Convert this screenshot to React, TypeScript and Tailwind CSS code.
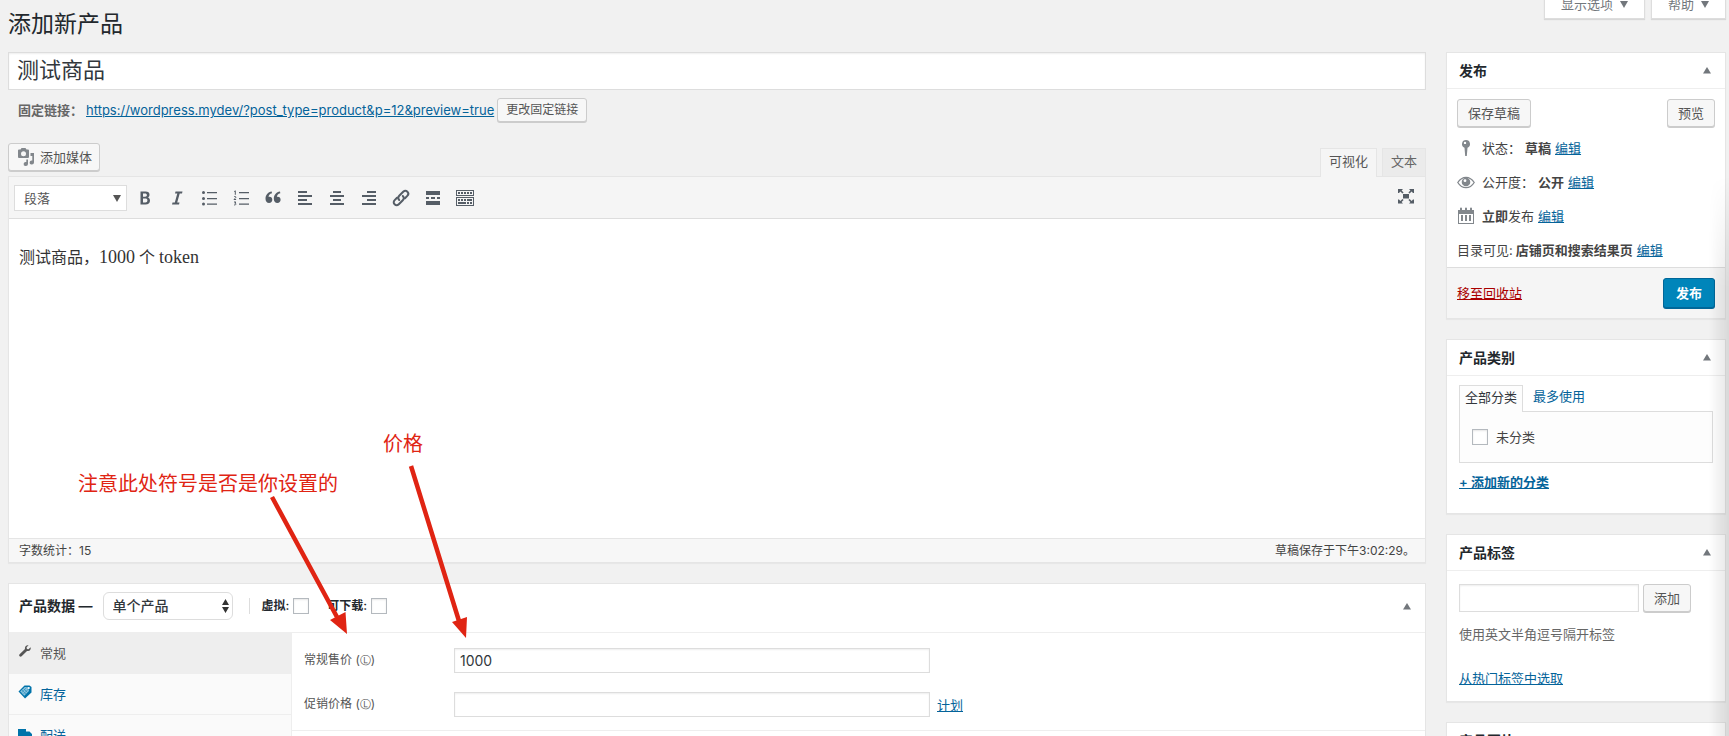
import { useState } from "react";
import type { ReactNode } from "react";

const BUTTON =
  "rounded-[3px] border border-[#ccc] bg-[#f7f7f7] text-[#555] shadow-[0_1px_0_#ccc] whitespace-nowrap";
const LINK = "text-[#04639a] underline";
const CHECKBOX =
  "size-4 shrink-0 appearance-none border border-[#b4b9be] bg-white shadow-[inset_0_1px_2px_rgba(0,0,0,0.1)]";
const FIELD = "border border-[#ddd] bg-white text-[#32373c] shadow-[inset_0_1px_2px_rgba(0,0,0,0.07)]";

function Triangle({ up = false, className = "" }: { up?: boolean; className?: string }) {
  return (
    <svg className={className} width="8" height="7" viewBox="0 0 8 7" fill="currentColor">
      <path d={up ? "M4 0L8 6.5H0z" : "M0 0h8L4 7z"} />
    </svg>
  );
}

function ToolIcon({ label, children }: { label: string; children: ReactNode }) {
  return (
    <button type="button" aria-label={label} className="flex size-5 items-center justify-center text-[#555d66]">
      <svg width="20" height="20" viewBox="0 0 20 20" fill="currentColor">
        {children}
      </svg>
    </button>
  );
}

function Toolbar() {
  return (
    <div className="flex h-[42px] items-center justify-between border-b border-[#ddd] bg-[#f5f5f5] pr-[9px] pl-[5px]">
      <div className="flex items-center gap-3">
        <div className="relative -mr-1">
          <select
            aria-label="格式"
            className="h-[26px] w-[113px] appearance-none border border-[#ddd] bg-white pl-[9px] text-[13px] text-[#555]"
          >
            <option>段落</option>
          </select>
          <Triangle className="pointer-events-none absolute top-[10px] right-[6px] text-[#555]" />
        </div>
        <ToolIcon label="粗体">
          <path
            fillRule="evenodd"
            d="M5.5 3.5h5c2.6 0 4 1.1 4 3.2 0 1.4-.7 2.4-1.9 2.8 1.5.3 2.4 1.4 2.4 3 0 2.5-1.7 4-4.5 4h-5zM8 5.5v3.2h2.100c1.200 0 1.800-.5 1.800-1.600s-.7-1.600-1.900-1.600zm0 5v3.900h2.300c1.400 0 2.100-.7 2.100-2s-.8-1.900-2.200-1.900z"
          />
        </ToolIcon>
        <ToolIcon label="斜体">
          <path d="M8.500 3.500h7l-.5 2h-2.300l-2.500 9h2.300l-.5 2H5l.5-2h2.300l2.500-9H8z" />
        </ToolIcon>
        <ToolIcon label="项目符号列表">
          <circle cx="4.500" cy="4.500" r="1.500" />
          <circle cx="4.500" cy="10.500" r="1.500" />
          <circle cx="4.500" cy="16" r="1.500" />
          <path d="M8 4h10v1.300H8zM8 10h10v1.300H8zM8 15.500h10v1.300H8z" />
        </ToolIcon>
        <ToolIcon label="编号列表">
          <path d="M8 4h10v1.300H8zM8 10h10v1.300H8zM8 15.500h10v1.300H8z" />
          <path
            d="M3.200 3.600l1.100-.8v4M3 9c.3-.8 2-.7 1.900.3 0 .7-1.800 1.500-1.900 2.200h2.100M3 14h1.900l-1 1.200c1.700.1 1.300 2.200-.9 1.700"
            fill="none"
            stroke="currentColor"
          />
        </ToolIcon>
        <ToolIcon label="段落引用">
          <path d="M9 5.200C6.500 5.800 5.700 7.300 5.600 8.900c2.200-.5 3.700.8 3.700 2.900 0 1.900-1.300 3.200-3.200 3.200-2.300 0-3.600-1.700-3.600-4.200 0-3.800 2.400-6.600 6.200-7.200zM17.300 5.200c-2.500.6-3.300 2.100-3.400 3.700 2.200-.5 3.700.8 3.700 2.900 0 1.900-1.300 3.200-3.200 3.200-2.300 0-3.600-1.700-3.600-4.200 0-3.800 2.400-6.600 6.200-7.200z" />
        </ToolIcon>
        <ToolIcon label="左对齐">
          <path d="M3 3h9v2H3zM3 7h14v2H3zM3 11h9v2H3zM3 15h14v2H3z" />
        </ToolIcon>
        <ToolIcon label="居中对齐">
          <path d="M6 3h8v2H6zM3 7h14v2H3zM6 11h8v2H6zM3 15h14v2H3z" />
        </ToolIcon>
        <ToolIcon label="右对齐">
          <path d="M8 3h9v2H8zM3 7h14v2H3zM8 11h9v2H8zM3 15h14v2H3z" />
        </ToolIcon>
        <ToolIcon label="插入链接">
          <g fill="none" stroke="currentColor" strokeWidth="2" strokeLinecap="round">
            <path d="M8.200 12c-1.300-1.300-1.300-2.900 0-4.200l4-4c1.300-1.300 3-1.300 4.200-.1s1.200 2.900-.1 4.200l-2.300 2.300" />
            <path d="M11.800 8c1.300 1.300 1.300 2.900 0 4.200l-4 4c-1.300 1.300-3 1.300-4.200.1s-1.200-2.900.1-4.200L6 9.800" />
          </g>
        </ToolIcon>
        <ToolIcon label="插入More标签">
          <path d="M3 3h14v4H3zM3 9h3v2H3zM8 9h4v2H8zM14 9h3v2h-3zM3 13h14v4H3z" />
        </ToolIcon>
        <ToolIcon label="工具栏切换">
          <path fillRule="evenodd" d="M1 2h18v6H1zm1 1v4h16V3zM1 9h18v9H1zm1 1v7h16v-7z" />
          <path d="M3 4h2v2H3zM6 4h2v2H6zM9 4h2v2H9zM12 4h2v2h-2zM15 4h2v2h-2zM3 11h2v2H3zM6 11h2v2H6zM9 11h2v2H9zM12 11h5v2h-5zM3 14h8v2H3zM12 14h2v2h-2zM15 14h2v2h-2z" />
        </ToolIcon>
      </div>
      <div className="pb-1">
        <ToolIcon label="免打扰写作模式">
          <path d="M7 8h6v4.500H7zM2 3h5L5.600 4.400l2 2-1.200 1.200-2-2L3 7H2zM18 3h-5l1.400 1.400-2 2 1.200 1.200 2-2L17 7h1zM2 17.500h5l-1.400-1.400 2-2-1.200-1.200-2 2L3 13.500H2zM18 17.500h-5l1.400-1.400-2-2 1.200-1.200 2 2 1.400-1.400h1z" />
        </ToolIcon>
      </div>
    </div>
  );
}

function Editor() {
  return (
    <section className="mt-5">
      <div className="flex items-end justify-between">
        <button type="button" className={`${BUTTON} mb-[5px] flex h-7 items-center gap-1 px-[7px] text-[13px]`}>
          <svg width="20" height="20" viewBox="0 0 20 20" fill="#82878c">
            <path
              fillRule="evenodd"
              d="M4.500 2.500L5.500 1h4l1 1.500H12q1 0 1 1V10q0 1-1 1H3q-1 0-1-1V3.500q0-1 1-1zm3 1.700a2.500 2.500 0 100 5 2.500 2.500 0 000-5z"
            />
            <path d="M14.500 6H18v9.500a2.200 2 0 11-1.700-2V9h-1.800zM12 12.500v4.500a2.200 2 0 11-1.700-2v-2.500z" />
          </svg>
          添加媒体
        </button>
        <div className="flex items-end text-[13px]">
          <button
            type="button"
            className="relative -mb-px mr-[5px] h-[29px] border border-b-0 border-[#e5e5e5] bg-[#f5f5f5] px-2 pb-1 text-[#555]"
          >
            可视化
          </button>
          <button
            type="button"
            className="h-7 border border-b-0 border-[#e5e5e5] bg-[#ebebeb] px-2 pb-[3px] text-[#666]"
          >
            文本
          </button>
        </div>
      </div>
      <div className="border border-[#e5e5e5] bg-white shadow-[0_1px_1px_rgba(0,0,0,0.04)]">
        <Toolbar />
        <div className="h-[319px] px-[10px] pt-6 font-['Liberation_Serif','Noto_Sans_CJK_SC',serif] text-base leading-7 text-[#333]">
          <p>
            测试商品，<span className="text-lg leading-7">1000</span> 个 <span className="text-lg leading-7">token</span>
          </p>
        </div>
        <div className="flex h-6 items-center justify-between border-t border-[#e5e5e5] bg-[#f7f7f7] px-[10px] text-xs text-[#444]">
          <span>字数统计：15</span>
          <span>草稿保存于下午3:02:29。</span>
        </div>
      </div>
    </section>
  );
}

function PriceRow({ id, label, value, children }: { id: string; label: string; value: string; children?: ReactNode }) {
  return (
    <div className="flex items-center">
      <label htmlFor={id} className="w-[150px] shrink-0 text-xs text-[#555]">
        {label} (<span className="font-['DejaVu_Sans',sans-serif] text-[11px]">Ⓛ</span>)
      </label>
      <input id={id} defaultValue={value} className={`${FIELD} mr-[7px] h-[25px] w-[476px] px-[5px] text-sm`} />
      {children}
    </div>
  );
}

function ProductData() {
  return (
    <section className="mt-5 border border-[#e5e5e5] bg-white">
      <div className="flex h-[49px] items-center border-b border-[#eee] pr-[14px] pb-1 pl-[10px] text-xs font-semibold text-[#23282d]">
        <h2 className="mr-[10px] text-sm">产品数据 —</h2>
        <div className="relative">
          <select
            aria-label="产品类型"
            className="h-7 w-[130px] appearance-none rounded-md border border-[#ddd] bg-white pl-[9px] text-sm font-medium text-[#32373c]"
          >
            <option>单个产品</option>
          </select>
          <svg
            className="pointer-events-none absolute top-[7px] right-1"
            width="7"
            height="14"
            viewBox="0 0 7 14"
            fill="#333"
          >
            <path d="M3.500 0L7 6H0zM0 8h7l-3.500 6z" />
          </svg>
        </div>
        <span className="mr-3 ml-4 h-4 border-l border-[#ddd]" />
        <label className="mr-[18px] flex items-center gap-1">
          虚拟:
          <input type="checkbox" className={CHECKBOX} />
        </label>
        <label className="flex items-center gap-1">
          可下载:
          <input type="checkbox" className={CHECKBOX} />
        </label>
        <button type="button" aria-label="切换产品数据" className="ml-auto text-[#72777c]">
          <Triangle up />
        </button>
      </div>
      <div className="flex">
        <ul className="w-[283px] shrink-0 border-r border-[#eee] bg-[#fafafa] text-[13px]">
          <li className="border-b border-[#eee] bg-[#eee]">
            <a href="#general" className="flex h-10 items-center gap-2 px-[9px] text-[#555]">
              <svg className="mb-1" width="14" height="14" viewBox="0 0 14 14" fill="currentColor">
                <path d="M12.600 3.300L10.500 5.200 8.900 4.900 8.600 3.300 10.600 1.300C8.900.8 7 1.900 6.900 4l.1 1L1.600 10.300c-.6.6-.6 1.400 0 2s1.400.6 2 0L9 7l1.100.1c2 0 3.100-2 2.500-3.800z" />
              </svg>
              常规
            </a>
          </li>
          <li className="border-b border-[#eee]">
            <a href="#inventory" className="flex h-10 items-center gap-2 px-[9px] text-[#04639a]">
              <svg className="mb-1" width="14" height="14" viewBox="0 0 14 14">
                <path d="M.5 6.500L6.500.5h5l2 1.500v5.500L7 13.500z" fill="#0073aa" />
                <path d="M2.200 6.500L6.800 2l3.700.3.4 3.700-4.600 4.800z" fill="#8cc4de" />
                <path
                  d="M4 5l4 4.200M5.500 3.500l4 4M3.500 7.800l5-5.200M5 9.500l5.400-5.500"
                  stroke="#2b8fbf"
                  strokeWidth=".7"
                />
                <circle cx="10.800" cy="3" r="1" fill="#fff" />
              </svg>
              库存
            </a>
          </li>
          <li className="border-b border-[#eee]">
            <a href="#shipping" className="flex h-10 items-center gap-2 px-[9px] text-[#04639a]">
              <svg width="14" height="14" viewBox="0 0 14 14" fill="#0073aa">
                <path d="M0 1h8v2.500h3.500L14 6v5h-1.500a1.800 1.800 0 01-3.500 0H5.500a1.800 1.800 0 01-3.500 0H0z" />
              </svg>
              配送
            </a>
          </li>
        </ul>
        <div className="flex flex-1 flex-col">
          <div className="flex flex-col gap-[19px] border-b border-[#eee] px-3 pt-[15px] pb-[13px]">
            <PriceRow id="regular-price" label="常规售价" value="1000" />
            <PriceRow id="sale-price" label="促销价格" value="">
              <a href="#schedule" className={`${LINK} text-[13px]`}>
                计划
              </a>
            </PriceRow>
          </div>
        </div>
      </div>
    </section>
  );
}

function MetaBox({ title, children }: { title: string; children?: ReactNode }) {
  return (
    <section className="border border-[#e5e5e5] bg-white shadow-[0_1px_1px_rgba(0,0,0,0.04)]">
      <div className="flex h-9 items-center justify-between border-b border-[#eee] pr-[14px] pl-3">
        <h2 className="text-sm font-semibold text-[#23282d]">{title}</h2>
        <button type="button" aria-label={`切换${title}`} className="text-[#72777c]">
          <Triangle up />
        </button>
      </div>
      {children}
    </section>
  );
}

function EditLink() {
  return (
    <a href="#edit" className={`${LINK} ml-1`}>
      编辑
    </a>
  );
}

function PublishBox() {
  return (
    <MetaBox title="发布">
      <div className="px-[10px] pt-[10px] text-[#444]">
        <div className="flex justify-between">
          <button type="button" className={`${BUTTON} h-7 px-[10px]`}>
            保存草稿
          </button>
          <button type="button" className={`${BUTTON} h-7 px-[10px]`}>
            预览
          </button>
        </div>
        <ul className="pt-1">
          <li className="flex h-[34px] items-center">
            <svg className="mr-[7px]" width="18" height="20" viewBox="0 0 18 20" fill="#82878c">
              <path
                fillRule="evenodd"
                d="M9 2a4 4 0 011.500 7.700L9.800 18H8.200L7.500 9.700A4 4 0 019 2zm-1 1.700a1.200 1.200 0 100 2.400 1.200 1.200 0 000-2.400z"
              />
            </svg>
            状态：<strong className="ml-1 font-semibold">草稿</strong>
            <EditLink />
          </li>
          <li className="flex h-[34px] items-center">
            <svg className="mr-[7px]" width="18" height="20" viewBox="0 0 18 20">
              <path
                d="M.8 10.500C3 7 6 5.300 9 5.300s6 1.700 8.200 5.200C15 14 12 15.700 9 15.700S3 14 .8 10.500z"
                fill="none"
                stroke="#82878c"
                strokeWidth="1.300"
              />
              <circle cx="9" cy="10" r="4.300" fill="#82878c" />
              <circle cx="8" cy="8.700" r="1.400" fill="#fff" />
            </svg>
            公开度：<strong className="ml-1 font-semibold">公开</strong>
            <EditLink />
          </li>
          <li className="flex h-[34px] items-center">
            <svg className="mr-[7px]" width="18" height="20" viewBox="0 0 18 20" fill="#82878c">
              <path
                fillRule="evenodd"
                d="M1 4h2V2.500a1 1 0 012 0V4h3V2.500a1 1 0 012 0V4h3V2.500a1 1 0 012 0V4h2v14H1zm1 4v9h14V8z"
              />
              <path d="M4 9h2v6H4zM8 9h2v6H8zM12 9h2v6h-2z" />
            </svg>
            <strong className="font-semibold">立即</strong>发布
            <EditLink />
          </li>
          <li className="flex h-[34px] items-center">
            目录可见:<strong className="ml-[3px] font-semibold">店铺页和搜索结果页</strong>
            <EditLink />
          </li>
        </ul>
      </div>
      <div className="flex h-[51px] items-center justify-between border-t border-[#ddd] bg-[#f5f5f5] px-[10px]">
        <a href="#trash" className="text-[#a00] underline">
          移至回收站
        </a>
        <button
          type="button"
          className="h-[30px] rounded-[3px] border border-[#006799] bg-[#0085ba] px-3 font-semibold text-white shadow-[0_1px_0_#006799]"
        >
          发布
        </button>
      </div>
    </MetaBox>
  );
}

function CategoryBox() {
  return (
    <MetaBox title="产品类别">
      <div className="px-3 pt-[9px] pb-[17px]">
        <div className="flex">
          <button
            type="button"
            className="relative -mb-px h-[27px] border border-b-0 border-[#ddd] bg-[#fdfdfd] px-[5px] pb-1 text-[#32373c]"
          >
            全部分类
          </button>
          <button type="button" className="h-[26px] px-[10px] pb-1 text-[#04639a]">
            最多使用
          </button>
        </div>
        <div className="h-[52px] border border-[#ddd] bg-[#fdfdfd] px-3 pt-[15px]">
          <label className="flex items-center gap-2 text-[#444]">
            <input type="checkbox" className={CHECKBOX} />
            未分类
          </label>
        </div>
        <a href="#add-category" className={`${LINK} mt-[9px] mb-1 inline-block font-semibold`}>
          + 添加新的分类
        </a>
      </div>
    </MetaBox>
  );
}

function TagBox() {
  return (
    <MetaBox title="产品标签">
      <div className="px-3 pt-[13px] pb-[13px]">
        <div className="flex gap-1">
          <input aria-label="添加产品标签" className={`${FIELD} h-7 w-[180px] px-[5px]`} />
          <button type="button" className={`${BUTTON} h-7 px-[10px]`}>
            添加
          </button>
        </div>
        <p className="mt-3 text-[#666]">使用英文半角逗号隔开标签</p>
        <a href="#popular-tags" className={`${LINK} mt-6 inline-block`}>
          从热门标签中选取
        </a>
      </div>
    </MetaBox>
  );
}

function Annotations() {
  return (
    <div className="pointer-events-none absolute top-0 left-0 text-xl text-[#e02413]">
      <p className="absolute top-[430px] left-[383px] whitespace-nowrap">价格</p>
      <p className="absolute top-[470px] left-[78px] whitespace-nowrap">注意此处符号是否是你设置的</p>
      <svg width="500" height="660" viewBox="0 0 500 660">
        <path d="M272 497L337 617M411 466L459 621" fill="none" stroke="#e02413" strokeWidth="4.500" />
        <path d="M347 634L330 620l15.500-8zM466 638l-14-16 15-5z" fill="#e02413" />
      </svg>
    </div>
  );
}

export default function App() {
  const [title, setTitle] = useState("测试商品");

  return (
    <div className="relative h-screen overflow-hidden bg-[#f1f1f1] pr-[3px] pl-2 font-[Inter,'Noto_Sans_CJK_SC',sans-serif] text-[13px] leading-5 text-[#444]">
      <header className="flex h-[52px] items-start justify-between">
        <h1 className="pt-[9px] text-[23px] leading-[30px] text-[#23282d]">添加新产品</h1>
        <div className="-mt-[10px] flex gap-[6px] text-[#72777c]">
          <button
            type="button"
            className="flex h-[29px] items-center gap-[7px] border border-[#ddd] bg-white px-4 pb-px shadow-[0_1px_1px_rgba(0,0,0,0.1)]"
          >
            显示选项
            <Triangle />
          </button>
          <button
            type="button"
            className="flex h-[29px] items-center gap-[7px] border border-[#ddd] bg-white px-4 pb-px shadow-[0_1px_1px_rgba(0,0,0,0.1)]"
          >
            帮助
            <Triangle />
          </button>
        </div>
      </header>

      <div className="flex items-start gap-5">
        <main className="min-w-0 flex-1">
          <input
            aria-label="产品名称"
            value={title}
            onChange={(e) => setTitle(e.target.value)}
            className={`${FIELD} h-[38px] w-full px-2 pb-[6px] text-[22px]`}
          />
          <div className="mt-[7px] flex h-[26px] items-center px-[10px]">
            <strong className="font-semibold text-[#666]">固定链接：</strong>
            <a href="#preview" className={`${LINK} mx-[3px]`}>
              https://wordpress.mydev/?post_type=product&amp;p=12&amp;preview=true
            </a>
            <button type="button" className={`${BUTTON} h-6 px-2 text-xs`}>
              更改固定链接
            </button>
          </div>
          <Editor />
          <ProductData />
        </main>

        <aside className="flex w-[280px] shrink-0 flex-col gap-5">
          <PublishBox />
          <CategoryBox />
          <TagBox />
          <MetaBox title="产品图片" />
        </aside>
      </div>

      <Annotations />
      {/* Shade cast along the window's right edge */}
      <div className="pointer-events-none absolute top-44 right-0 bottom-0 w-5 bg-linear-to-r from-transparent to-black/10 mask-t-from-80% mask-t-to-100%" />
    </div>
  );
}
